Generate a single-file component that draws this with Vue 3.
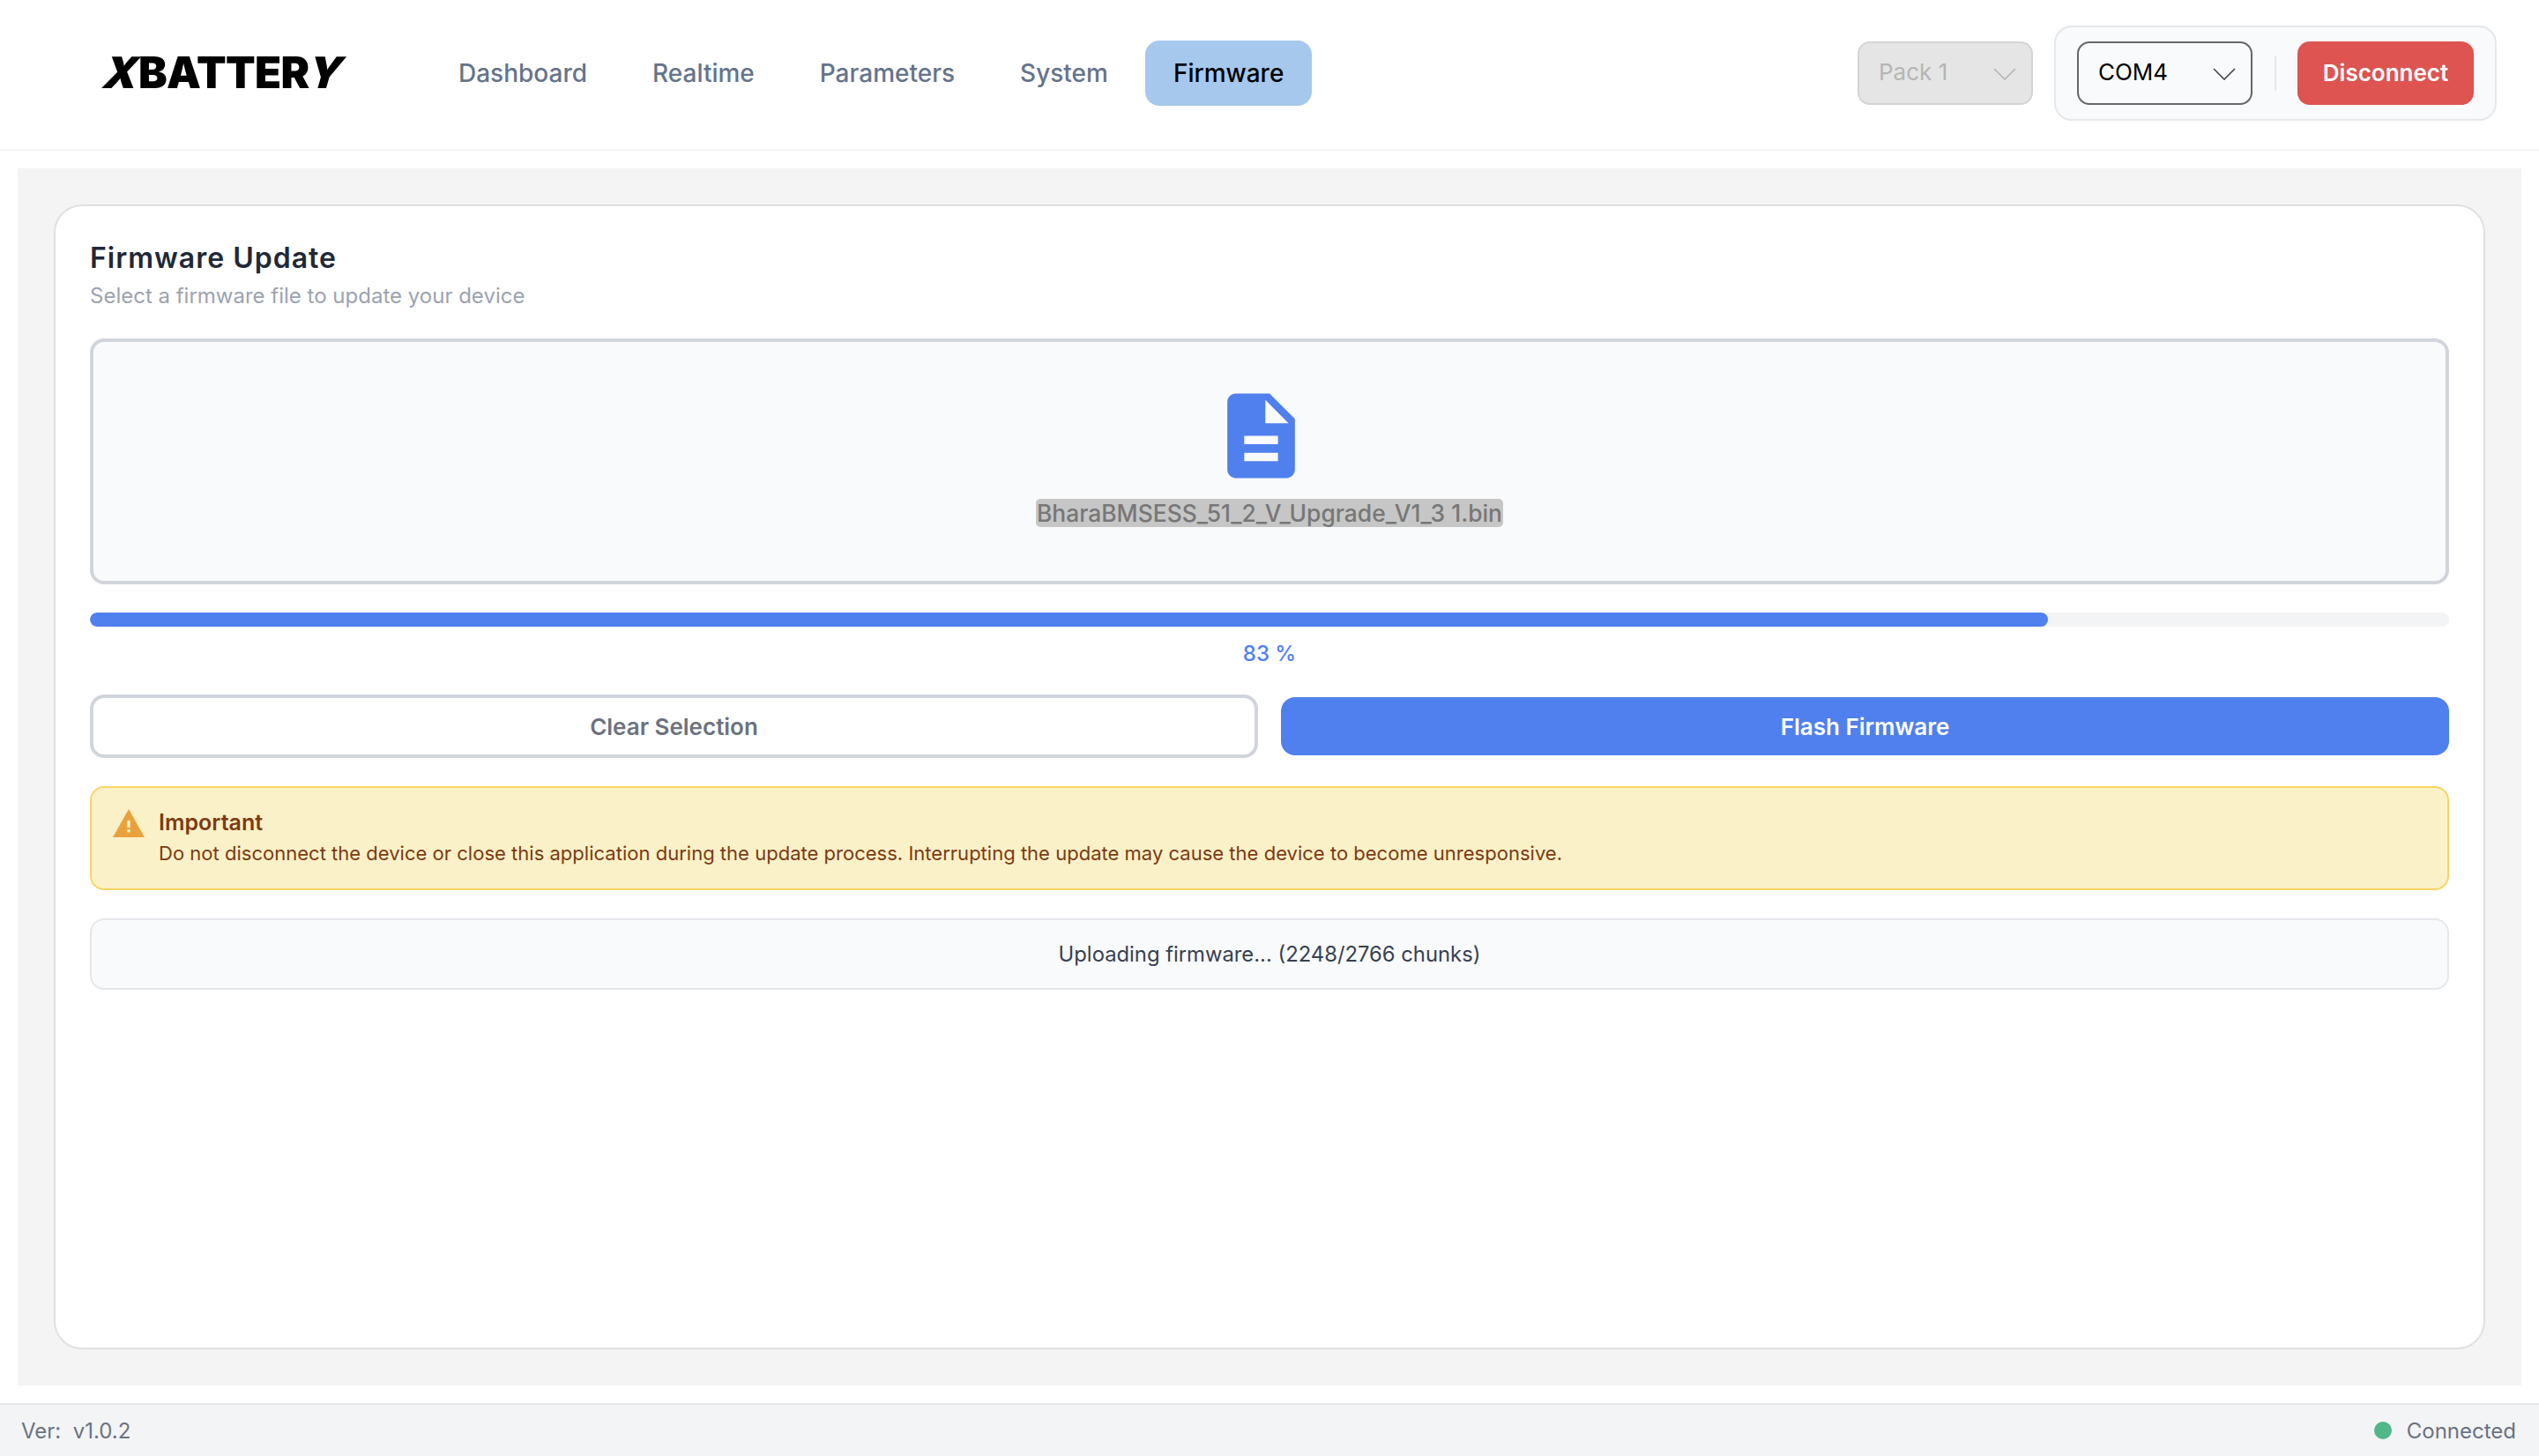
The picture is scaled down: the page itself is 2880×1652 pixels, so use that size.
<template>
  <div class="app">
    <header class="topbar">
      <div class="logo"><span class="logo-x">X</span>BATTER<span class="logo-y">Y</span></div>
      <nav class="nav">
        <a v-for="item in navItems" :key="item" class="nav-item" :class="{ active: item === 'Firmware' }">{{ item }}</a>
      </nav>
      <div class="topbar-right">
        <div class="select select-disabled">
          <span>Pack 1</span>
          <svg class="chevron" viewBox="0 0 26 14"><path d="M1 1l12 12L25 1" /></svg>
        </div>
        <div class="conn-group">
          <div class="select">
            <span>COM4</span>
            <svg class="chevron" viewBox="0 0 26 14"><path d="M1 1l12 12L25 1" /></svg>
          </div>
          <div class="divider"></div>
          <button class="btn-disconnect">Disconnect</button>
        </div>
      </div>
    </header>

    <main class="main">
      <section class="card">
        <h2 class="card-title">Firmware Update</h2>
        <p class="card-sub">Select a firmware file to update your device</p>

        <div class="dropzone">
          <svg class="file-icon" viewBox="0 0 24 24">
            <path d="M14 2H6c-1.1 0-2 .9-2 2v16c0 1.1.9 2 2 2h12c1.1 0 2-.9 2-2V8l-6-6zm2 16H8v-2h8v2zm0-4H8v-2h8v2zm-3-5V3.5L18.5 9H13z" />
          </svg>
          <span class="file-name">BharaBMSESS_51_2_V_Upgrade_V1_3 1.bin</span>
        </div>

        <div class="progress">
          <div class="progress-fill" :style="{ width: progress + '%' }"></div>
        </div>
        <div class="progress-label">{{ progress }} %</div>

        <div class="actions">
          <button class="btn btn-clear">Clear Selection</button>
          <button class="btn btn-flash">Flash Firmware</button>
        </div>

        <div class="notice">
          <svg class="warn-icon" viewBox="0 0 36 32">
            <path d="M18 0L36 32H0z" fill="#e9a23b" />
            <rect x="16.4" y="13" width="3.2" height="8" fill="#fbf1c8" />
            <rect x="16.4" y="23" width="3.2" height="3.4" fill="#fbf1c8" />
          </svg>
          <div class="notice-body">
            <div class="notice-title">Important</div>
            <div class="notice-text">Do not disconnect the device or close this application during the update process. Interrupting the update may cause the device to become unresponsive.</div>
          </div>
        </div>

        <div class="status">Uploading firmware... (2248/2766 chunks)</div>
      </section>
    </main>

    <footer class="footer">
      <span>Ver:&nbsp; v1.0.2</span>
      <span class="conn-state"><i class="dot"></i>Connected</span>
    </footer>
  </div>
</template>

<script setup>
const navItems = ['Dashboard', 'Realtime', 'Parameters', 'System', 'Firmware']
const progress = 83
</script>

<style>
html, body {
  margin: 0;
  background: #fff;
}
</style>

<style scoped>
.app {
  width: 2880px;
  height: 1652px;
  display: flex;
  flex-direction: column;
  font-family: Inter, "Noto Sans", sans-serif;
  overflow: hidden;
}

.topbar {
  height: 171px;
  box-sizing: border-box;
  flex-shrink: 0;
  display: flex;
  align-items: center;
  padding: 0 48px 4px 119px;
  border-bottom: 2px solid #f3f4f6;
}

.logo {
  width: 275px;
  margin-right: 94px;
  font-size: 49px;
  font-weight: 900;
  letter-spacing: -0.6px;
  line-height: 1;
  color: #000;
  white-space: nowrap;
}

.logo-x,
.logo-y {
  display: inline-block;
  transform: skewX(-16deg);
}

.nav {
  display: flex;
  align-items: center;
  gap: 10px;
}

.nav-item {
  padding: 0 32px;
  height: 74px;
  display: flex;
  align-items: center;
  border-radius: 16px;
  font-size: 28px;
  font-weight: 500;
  color: #64748b;
}

.nav-item.active {
  background: #a5c8ec;
  color: #000;
}

.topbar-right {
  margin-left: auto;
  display: flex;
  align-items: center;
  gap: 24px;
}

.select {
  width: 199px;
  height: 72px;
  box-sizing: border-box;
  display: flex;
  align-items: center;
  justify-content: space-between;
  padding: 0 17px 3px 22px;
  border: 2px solid #666;
  border-radius: 14px;
  font-size: 26px;
  color: #000;
}

.select-disabled {
  background: #e5e5e5;
  border-color: #d4d4d4;
  color: #b5b5b5;
}

.chevron {
  width: 26px;
  height: 14px;
  margin-top: 6px;
  fill: none;
  stroke: #444;
  stroke-width: 1.6;
}

.select-disabled .chevron {
  stroke: #b5b5b5;
}

.conn-group {
  display: flex;
  align-items: center;
  height: 108px;
  box-sizing: border-box;
  padding: 0 24px;
  background: #f9fafb;
  border: 2px solid #e5e7eb;
  border-radius: 20px;
}

.divider {
  width: 2px;
  height: 40px;
  margin: 0 24px 0 25px;
  background: #e5e7eb;
}

.btn-disconnect {
  width: 200px;
  height: 72px;
  border: none;
  border-radius: 14px;
  background: #dd5450;
  color: #fff;
  font-family: inherit;
  font-size: 26px;
  font-weight: 600;
}

.main {
  flex: 1;
  margin: 20px;
  padding: 41px;
  background: #f4f4f5;
  display: flex;
}

.card {
  flex: 1;
  box-sizing: border-box;
  background: #fff;
  border: 2px solid #e0e0e0;
  border-radius: 32px;
  padding: 39px 39px 0;
  display: flex;
  flex-direction: column;
}

.card-title {
  margin: 0;
  font-size: 32px;
  font-weight: 600;
  line-height: 40px;
  letter-spacing: 1px;
  color: #1f2937;
}

.card-sub {
  margin: 7px 0 0;
  font-size: 24px;
  line-height: 32px;
  color: #9ca3af;
}

.dropzone {
  margin-top: 32px;
  height: 279px;
  box-sizing: border-box;
  border: 4px solid #d1d5db;
  border-radius: 16px;
  background: #f9fafb;
  display: flex;
  flex-direction: column;
  align-items: center;
  padding-top: 49px;
}

.file-icon {
  width: 115px;
  height: 115px;
  fill: #4f80ee;
  margin-right: 19px;
  flex-shrink: 0;
}

.file-name {
  margin-top: 14px;
  padding: 0 1px;
  border-radius: 5px;
  background: #c6c6c6;
  font-size: 26.4px;
  font-weight: 500;
  line-height: 32px;
  color: #777;
}

.progress {
  margin-top: 32px;
  height: 16px;
  border-radius: 8px;
  background: #f3f4f6;
  overflow: hidden;
}

.progress-fill {
  height: 100%;
  background: #4f80ee;
  border-radius: 8px;
}

.progress-label {
  margin-top: 16px;
  text-align: center;
  font-size: 24px;
  line-height: 30px;
  font-weight: 500;
  color: #4f80ee;
}

.actions {
  margin-top: 31px;
  display: grid;
  grid-template-columns: 1fr 1fr;
  align-items: center;
  gap: 26px;
}

.btn {
  box-sizing: border-box;
  border-radius: 16px;
  font-family: inherit;
  font-size: 26px;
  font-weight: 600;
}

.btn-clear {
  height: 72px;
  background: #fff;
  border: 4px solid #d1d5db;
  color: #6b7280;
}

.btn-flash {
  height: 66px;
  background: #4f80ee;
  border: none;
  color: #fff;
}

.notice {
  margin-top: 32px;
  height: 118px;
  box-sizing: border-box;
  display: flex;
  align-items: center;
  gap: 16px;
  padding: 0 24px;
  background: #fbf1c8;
  border: 2px solid #f9d463;
  border-radius: 16px;
}

.warn-icon {
  width: 36px;
  height: 32px;
  flex-shrink: 0;
  margin-bottom: 35px;
}

.notice-title {
  font-size: 25px;
  font-weight: 600;
  line-height: 34px;
  color: #7c3a12;
}

.notice-text {
  font-size: 22.04px;
  line-height: 36px;
  color: #7c3a12;
}

.status {
  margin-top: 32px;
  height: 81px;
  box-sizing: border-box;
  display: flex;
  align-items: center;
  justify-content: center;
  background: #f9fafb;
  border: 2px solid #e5e7eb;
  border-radius: 16px;
  font-size: 23.8px;
  color: #374151;
}

.footer {
  height: 60px;
  flex-shrink: 0;
  box-sizing: border-box;
  display: flex;
  align-items: center;
  justify-content: space-between;
  padding: 0 26px 0 24px;
  background: #f3f4f6;
  border-top: 2px solid #e5e7eb;
  font-size: 24px;
  color: #6b7280;
}

.conn-state {
  display: flex;
  align-items: center;
}

.dot {
  width: 20px;
  height: 20px;
  margin-right: 17px;
  border-radius: 50%;
  background: #52b788;
}
</style>
